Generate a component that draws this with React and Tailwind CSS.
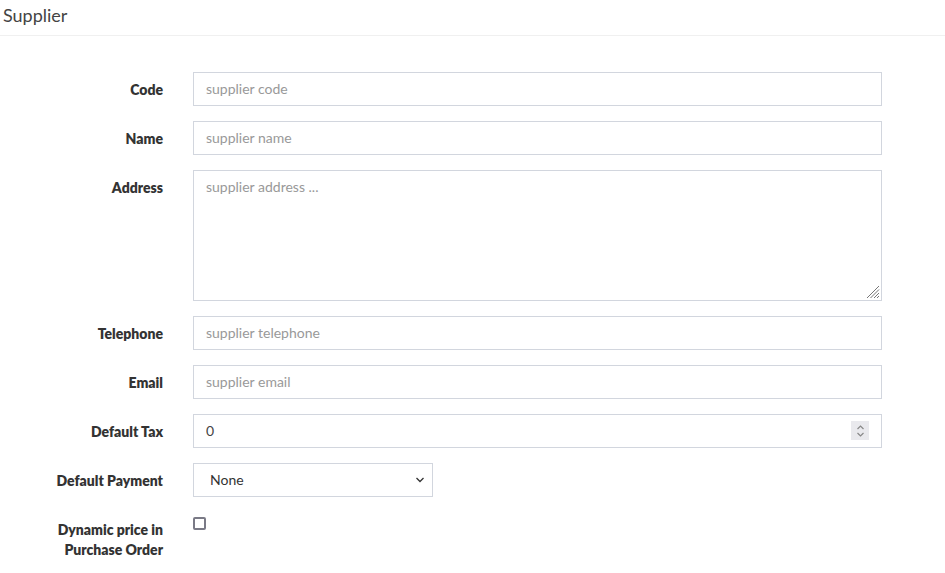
import { useState } from "react";

const font = { fontFamily: "Lato, 'Liberation Sans', sans-serif" };

const fields = [
  { label: "Code", placeholder: "supplier code" },
  { label: "Name", placeholder: "supplier name" },
];

const fields2 = [
  { label: "Telephone", placeholder: "supplier telephone" },
  { label: "Email", placeholder: "supplier email" },
];

const Row = ({ label, children }) => (
  <div className="flex gap-[30px]">
    <label className="ml-[48px] w-[115px] shrink-0 text-right font-extrabold text-[14px] leading-[20px] pt-[8px] text-[#333]">
      {label}
    </label>
    <div className="w-[689px]">{children}</div>
  </div>
);

const inputCls =
  "w-full h-[34px] border border-[#d2d6de] px-3 pb-[1px] text-[14px] text-[#444] placeholder:text-[#999] outline-none bg-white";

export default function App() {
  const [tax, setTax] = useState("0");
  const [dynamic, setDynamic] = useState(false);

  return (
    <div className="w-[945px] h-[573px] bg-white overflow-hidden" style={font}>
      {/* header begins */}
      <div className="border-b border-[#f0f0f0] h-[36px] px-[3px] pt-[3px]">
        <h3 className="text-[18px] leading-[24px] text-[#444]">Supplier</h3>
      </div>
      {/* header ends */}

      <form className="flex flex-col gap-[15px] pt-[36px]">
        {fields.map((f) => (
          <Row key={f.label} label={f.label}>
            <input className={inputCls} placeholder={f.placeholder} />
          </Row>
        ))}

        <Row label="Address">
          <div className="relative">
            <textarea
              className="w-full h-[131px] border border-[#d2d6de] px-3 py-[6px] text-[14px] leading-[20px] text-[#444] placeholder:text-[#999] outline-none block resize-none"
              placeholder="supplier address ..."
            />
            {/* resize grip */}
            <svg
              className="absolute right-[2px] bottom-[2px] pointer-events-none"
              width="14"
              height="14"
              viewBox="0 0 14 14"
              stroke="#777"
              strokeWidth="1"
            >
              <path d="M13 1L1 13M13 4.5L4.5 13M13 8L8 13M13 11L11 13" />
            </svg>
          </div>
        </Row>

        {fields2.map((f) => (
          <Row key={f.label} label={f.label}>
            <input className={inputCls} placeholder={f.placeholder} />
          </Row>
        ))}

        <Row label="Default Tax">
          <div className="relative">
            <input
              className={inputCls}
              value={tax}
              onChange={(e) => setTax(e.target.value)}
            />
            {/* spinner */}
            <div className="absolute right-[13px] top-[7px] w-[18px] h-[19px] bg-[#e9e9ed] flex flex-col items-center justify-center">
              <svg width="9" height="14" viewBox="0 0 9 14" fill="none" stroke="#888" strokeWidth="1.2">
                <path d="M1.5 5L4.5 2L7.5 5" />
                <path d="M1.5 9L4.5 12L7.5 9" />
              </svg>
            </div>
          </div>
        </Row>

        <Row label="Default Payment">
          <div className="relative w-[240px]">
            <select className="w-full h-[34px] border border-[#d2d6de] pl-[16px] pr-8 pb-[1px] text-[14px] text-[#333] bg-white appearance-none outline-none">
              <option>None</option>
              <option>Cash</option>
              <option>Credit</option>
            </select>
            <svg
              className="absolute right-[8px] top-[13px] pointer-events-none"
              width="10"
              height="8"
              viewBox="0 0 10 8"
              fill="none"
              stroke="#333"
              strokeWidth="1.3"
            >
              <path d="M1.5 2L5 5.5L8.5 2" />
            </svg>
          </div>
        </Row>

        <Row
          label={
            <>
              Dynamic price in
              <br />
              Purchase Order
            </>
          }
        >
          <input
            type="checkbox"
            checked={dynamic}
            onChange={(e) => setDynamic(e.target.checked)}
            className="appearance-none block mt-[5px] w-[13px] h-[13px] border-2 border-[#7a7a86] rounded-[2px] bg-white checked:bg-[#0075ff] checked:border-[#0075ff]"
          />
        </Row>
      </form>
    </div>
  );
}
